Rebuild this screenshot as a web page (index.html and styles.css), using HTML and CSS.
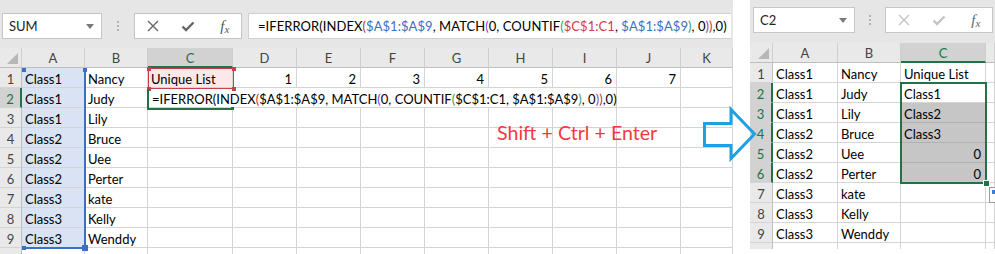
FILE: index.html
```html
<!DOCTYPE html>
<html>
<head>
<meta charset="utf-8">
<title>Unique list</title>
<link rel="stylesheet" href="styles.css">
</head>
<body>
<div class="page">
  <section class="sheet sheet-left">
    <div class="toolbar">
      <div class="namebox"><span>SUM</span><svg class="caret" width="8" height="5" viewBox="0 0 8 5"><path d="M0 0h8L4 5z"/></svg></div>
      <div class="dots"><i></i><i></i><i></i></div>
      <div class="btns">
        <span class="slot"><svg class="ico" width="12" height="12" viewBox="0 0 12 12"><path d="M1 1L11 11M11 1L1 11"/></svg></span>
        <span class="slot"><svg class="ico check" width="14" height="11" viewBox="0 0 14 11"><path d="M1.5 5.5L5 9L12.5 1.5"/></svg></span>
        <span class="slot"><span class="fx">f<span class="fxx">x</span></span></span>
      </div>
      <div class="fbar">=IFERROR(INDEX<span class="p-red">(</span><span class="r-blue">$A$1:$A$9</span>, MATCH<span class="p-purple">(</span>0, COUNTIF<span class="p-green">(</span><span class="r-red">$C$1:C1</span>, <span class="r-blue">$A$1:$A$9</span><span class="p-green">)</span>, 0<span class="p-purple">)</span><span class="p-red">)</span>,0)</div>
    </div>
    <div class="grid grid-left">
      <div class="ch corner"><i class="tri"></i></div><div class="ch">A</div><div class="ch">B</div><div class="ch sel">C</div><div class="ch">D</div><div class="ch">E</div><div class="ch">F</div><div class="ch">G</div><div class="ch">H</div><div class="ch">I</div><div class="ch">J</div><div class="ch">K</div>

      <div class="rh">1</div><div class="c blue">Class1</div><div class="c">Nancy</div><div class="c pink">Unique List</div><div class="c num">1</div><div class="c num">2</div><div class="c num">3</div><div class="c num">4</div><div class="c num">5</div><div class="c num">6</div><div class="c num">7</div><div class="c"></div>

      <div class="rh sel">2</div><div class="c blue">Class1</div><div class="c">Judy</div><div class="c edit">=IFERROR(INDEX<span class="p-red">(</span>$A$1:$A$9, MATCH<span class="p-purple">(</span>0, COUNTIF<span class="p-green">(</span>$C$1:C1, $A$1:$A$9<span class="p-green">)</span>, 0<span class="p-purple">)</span><span class="p-red">)</span>,0)</div><div class="c"></div><div class="c"></div>

      <div class="rh">3</div><div class="c blue">Class1</div><div class="c">Lily</div><div class="c"></div><div class="c"></div><div class="c"></div><div class="c"></div><div class="c"></div><div class="c"></div><div class="c"></div><div class="c"></div><div class="c"></div>
      <div class="rh">4</div><div class="c blue">Class2</div><div class="c">Bruce</div><div class="c"></div><div class="c"></div><div class="c"></div><div class="c"></div><div class="c"></div><div class="c"></div><div class="c"></div><div class="c"></div><div class="c"></div>
      <div class="rh">5</div><div class="c blue">Class2</div><div class="c">Uee</div><div class="c"></div><div class="c"></div><div class="c"></div><div class="c"></div><div class="c"></div><div class="c"></div><div class="c"></div><div class="c"></div><div class="c"></div>
      <div class="rh">6</div><div class="c blue">Class2</div><div class="c">Perter</div><div class="c"></div><div class="c"></div><div class="c"></div><div class="c"></div><div class="c"></div><div class="c"></div><div class="c"></div><div class="c"></div><div class="c"></div>
      <div class="rh">7</div><div class="c blue">Class3</div><div class="c">kate</div><div class="c"></div><div class="c"></div><div class="c"></div><div class="c"></div><div class="c"></div><div class="c"></div><div class="c"></div><div class="c"></div><div class="c"></div>
      <div class="rh">8</div><div class="c blue">Class3</div><div class="c">Kelly</div><div class="c"></div><div class="c"></div><div class="c"></div><div class="c"></div><div class="c"></div><div class="c"></div><div class="c"></div><div class="c"></div><div class="c"></div>
      <div class="rh">9</div><div class="c blue">Class3</div><div class="c">Wenddy</div><div class="c"></div><div class="c"></div><div class="c"></div><div class="c"></div><div class="c"></div><div class="c"></div><div class="c"></div><div class="c"></div><div class="c"></div>
      <div class="rh"></div><div class="c"></div><div class="c"></div><div class="c"></div><div class="c"></div><div class="c"></div><div class="c"></div><div class="c"></div><div class="c"></div><div class="c"></div><div class="c"></div><div class="c"></div>
    </div>
    <div class="rng rng-a"><i class="h h-tl"></i><i class="h h-tr"></i><i class="h h-bl"></i><i class="h h-br"></i></div>
    <div class="rng rng-c1"><i class="h h-tl"></i><i class="h h-tr"></i><i class="h h-bl"></i><i class="h h-br"></i></div>
    <div class="act-c2"><i class="gh"></i></div>
  </section>

  <section class="sheet sheet-right">
    <div class="toolbar">
      <div class="namebox"><span>C2</span><svg class="caret" width="8" height="5" viewBox="0 0 8 5"><path d="M0 0h8L4 5z"/></svg></div>
      <div class="dots"><i></i><i></i><i></i></div>
      <div class="btns off">
        <span class="slot"><svg class="ico" width="12" height="12" viewBox="0 0 12 12"><path d="M1 1L11 11M11 1L1 11"/></svg></span>
        <span class="slot"><svg class="ico check" width="14" height="11" viewBox="0 0 14 11"><path d="M1.5 5.5L5 9L12.5 1.5"/></svg></span>
        <span class="slot"><span class="fx">f<span class="fxx">x</span></span></span>
      </div>
    </div>
    <div class="grid grid-right">
      <div class="ch corner"><i class="tri"></i></div><div class="ch">A</div><div class="ch">B</div><div class="ch sel">C</div><div class="ch"></div>

      <div class="rh">1</div><div class="c">Class1</div><div class="c">Nancy</div><div class="c">Unique List</div><div class="c"></div>
      <div class="rh sel">2</div><div class="c">Class1</div><div class="c">Judy</div><div class="c">Class1</div><div class="c"></div>
      <div class="rh sel">3</div><div class="c">Class1</div><div class="c">Lily</div><div class="c grey">Class2</div><div class="c"></div>
      <div class="rh sel">4</div><div class="c">Class2</div><div class="c">Bruce</div><div class="c grey">Class3</div><div class="c"></div>
      <div class="rh sel">5</div><div class="c">Class2</div><div class="c">Uee</div><div class="c grey num">0</div><div class="c"></div>
      <div class="rh sel">6</div><div class="c">Class2</div><div class="c">Perter</div><div class="c grey num">0</div><div class="c"></div>
      <div class="rh">7</div><div class="c">Class3</div><div class="c">kate</div><div class="c"></div><div class="c"></div>
      <div class="rh">8</div><div class="c">Class3</div><div class="c">Kelly</div><div class="c"></div><div class="c"></div>
      <div class="rh">9</div><div class="c">Class3</div><div class="c">Wenddy</div><div class="c"></div><div class="c"></div>
      <div class="rh"></div><div class="c"></div><div class="c"></div><div class="c"></div><div class="c"></div>
    </div>
    <div class="sel-box"><i class="fill-h"></i></div>
    <div class="paste"><i></i></div>
  </section>

  <div class="note">Shift + Ctrl + Enter</div>
  <svg class="arrow" width="62" height="60" viewBox="0 0 62 60"><polygon points="4.5,19.5 31,19.5 31,5.5 54.5,30 31,54.5 31,41.5 4.5,41.5"/></svg>
</div>
</body>
</html>
```

FILE: styles.css
```css
* { box-sizing: border-box; }
html, body { margin: 0; padding: 0; background: #fff; }
.page {
  position: relative;
  width: 995px;
  height: 254px;
  overflow: hidden;
  display: flex;
  gap: 17px;
  background: #fff;
  font-family: Lato, "Liberation Sans", sans-serif;
  font-size: 13px;
  color: #000;
}
.sheet { position: relative; flex: none; overflow: hidden; background: #e6e6e6; }
.sheet-left { width: 733px; height: 254px; }
.sheet-right { width: 245px; height: 249px; }

/* toolbar */
.toolbar { display: flex; align-items: center; height: 26px; }
.sheet-left .toolbar { margin: 13px 0 9px; padding-left: 2px; }
.sheet-right .toolbar { margin: 7px 0 10px; padding-left: 3px; }
.namebox {
  flex: none;
  width: 100px;
  height: 26px;
  background: #fff;
  border: 1px solid #c6c6c6;
  display: flex;
  align-items: center;
  justify-content: space-between;
  padding: 0 7px 0 6px;
  font-size: 13px;
  color: #222;
}
.sheet-right .namebox { width: 102px; }
.caret { fill: #7a7a7a; }
.dots { flex: none; width: 32px; display: flex; flex-direction: column; align-items: center; gap: 2px; }
.sheet-right .dots { width: 30px; }
.dots i { display: block; width: 2px; height: 2px; background: #b3b3b3; }
.btns {
  flex: none;
  width: 108px;
  height: 26px;
  background: #fff;
  border: 1px solid #c6c6c6;
  display: grid;
  grid-template-columns: 1fr 1fr 1fr;
  align-items: center;
  justify-items: center;
}
.slot { display: flex; align-items: center; justify-content: center; }
.ico { fill: none; stroke: #666; stroke-width: 1.4; }
.ico.check { stroke-width: 2.4; }
.fx { font-family: "Liberation Serif", serif; font-style: italic; font-size: 15px; color: #555; line-height: 1; margin-left: 3px; }
.fxx { font-size: 11px; position: relative; top: 2px; }
.btns.off .ico { stroke: #c4c4c4; }
.btns.off .fx { color: #666; }
.fbar {
  flex: 1;
  margin: 0 2px 0 6px;
  height: 26px;
  background: #fff;
  border: 1px solid #d0d0d0;
  border-right: none;
  padding: 3px 0 0 9px;
  line-height: 19px;
  white-space: nowrap;
  font-size: 13px;
  letter-spacing: 0.06px;
}
.r-blue { color: #3b6fc6; }
.r-red { color: #d23b48; }
.p-red { color: #c0392b; }
.p-purple { color: #8e44c6; }
.p-green { color: #2f9e6a; }

/* grid */
.grid { display: grid; grid-auto-rows: 20px; background: #fff; }
.grid-left { grid-template-columns: 22px 63px 63px 85px 64px 64px 64px 64px 64px 64px 64px 52px; }
.grid-right { grid-template-columns: 23px 65px 63px 85px 9px; }
.ch {
  background: #e9e9e9;
  border-right: 1px solid #cfcfcf;
  border-bottom: 1px solid #bfbfbf;
  text-align: center;
  line-height: 19px;
  padding-top: 1px;
  color: #444;
  font-size: 13px;
}
.ch.corner { position: relative; }
.tri {
  position: absolute;
  right: 3px;
  bottom: 3px;
  width: 0;
  height: 0;
  border-left: 11px solid transparent;
  border-bottom: 11px solid #b7b7b7;
}
.ch.sel { background: #d2d2d2; border-bottom: 2px solid #217346; color: #217346; }
.rh {
  background: #e9e9e9;
  border-right: 1px solid #bfbfbf;
  border-bottom: 1px solid #d4d4d4;
  text-align: center;
  line-height: 19px;
  padding-top: 2px;
  color: #444;
  font-size: 13px;
}
.rh.sel { background: #d2d2d2; border-right: 2px solid #217346; color: #217346; }
.c {
  border-right: 1px solid #d4d4d4;
  border-bottom: 1px solid #d4d4d4;
  padding: 2px 3px 0;
  line-height: 19px;
  white-space: nowrap;
  overflow: visible;
}
.c.num { text-align: right; padding-right: 4px; }
.c.blue { background: #d9e3f4; }
.c.pink { background: #fce8e8; }
.c.grey { background: #c6c6c6; border-bottom-color: #b2b2b2; }
.c.edit { grid-column: span 7; padding-left: 4px; }

/* range overlays */
.rng { position: absolute; }
.rng .h { position: absolute; width: 4px; height: 4px; }
.rng-a { left: 22px; top: 68px; width: 64px; height: 181px; border-right: 2px solid #3d6fc4; border-bottom: 2px solid #3d6fc4; }
.rng-a .h { background: #3d6fc4; }
.rng-c1 { left: 148px; top: 68px; width: 86px; height: 21px; border: 1px solid #c8404a; }
.rng-c1 .h { background: #c8404a; }
.h-tl { left: -2px; top: -2px; }
.h-tr { right: -3px; top: -2px; }
.h-bl { left: -2px; bottom: -3px; }
.h-br { right: -3px; bottom: -3px; }
.rng-a .h-tl { left: 0; top: 0; }
.rng-a .h-tr { right: -3px; top: 0; }
.rng-a .h-bl { left: 0; bottom: -3px; }
.rng-a .h-br { right: -4px; bottom: -4px; width: 6px; height: 6px; }
.act-c2 { position: absolute; left: 147px; top: 89px; width: 86px; height: 21px; border-left: 2px solid #217346; border-bottom: 2px solid #217346; }
.gh { position: absolute; right: -1px; bottom: -2px; width: 3px; height: 3px; background: #217346; }

.sel-box { position: absolute; left: 150px; top: 82px; width: 87px; height: 102px; border: 2px solid #217346; }
.fill-h { position: absolute; right: -5px; bottom: -5px; width: 7px; height: 7px; background: #217346; border: 1px solid #fff; }
.paste { position: absolute; left: 239px; top: 187px; width: 16px; height: 16px; background: #fff; border: 1px solid #9a9a9a; padding: 2px; }
.paste i { display: block; width: 10px; height: 4px; background: #3b7ddd; }

/* overlays on page */
.note {
  position: absolute;
  left: 497px;
  top: 121px;
  font-size: 19.6px;
  line-height: 24px;
  color: #f5393f;
  white-space: nowrap;
}
.arrow { position: absolute; left: 700px; top: 104px; }
.arrow polygon { fill: none; stroke: #1ea0e4; stroke-width: 3; stroke-linejoin: miter; }
```
